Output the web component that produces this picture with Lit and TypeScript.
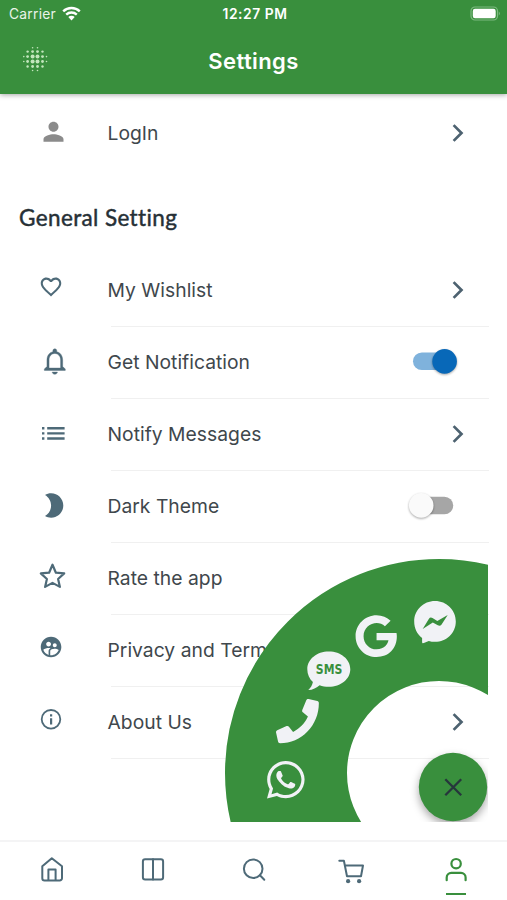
import { LitElement, html, svg, css } from "lit";
import { customElement, property } from "lit/decorators.js";

// Row icons are drawn on a 40x40 canvas, one unit per pixel.
const rowIcons: Record<string, unknown> = {
  person: svg`<path transform="translate(5.5 4.8) scale(1.25)" fill="#8b8b8b" d="M12 12c2.21 0 4-1.79 4-4s-1.79-4-4-4-4 1.79-4 4 1.79 4 4 4zm0 2c-2.67 0-8 1.34-8 4v2h16v-2c0-2.66-5.33-4-8-4z"/>`,
  heart: svg`<path transform="translate(5.7 5.5) scale(1.025)" d="M16.5 3c-1.74 0-3.41.81-4.5 2.09C10.91 3.81 9.24 3 7.5 3 4.42 3 2 5.42 2 8.5c0 3.78 3.4 6.86 8.55 11.54L12 21.35l1.45-1.32C18.6 15.36 22 12.28 22 8.5 22 5.42 19.58 3 16.5 3zm-4.4 15.55l-.1.1-.1-.1C7.14 14.24 4 11.39 4 8.5 4 6.5 5.5 5 7.5 5c1.54 0 3.04.99 3.57 2.36h1.87C13.46 5.99 14.96 5 16.5 5c2 0 3.5 1.5 3.5 3.5 0 2.89-3.14 5.74-7.9 10.05z"/>`,
  bell: svg`<path transform="translate(6.1 4.5) scale(1.31)" stroke="#4e6a78" stroke-width=".3" d="M12 22c1.1 0 2-.8 2-1.7h-4c0 .9.9 1.7 2 1.7zm6-6v-5c0-3.07-1.63-5.64-4.5-6.32V4c0-.83-.67-1.5-1.5-1.5s-1.5.67-1.5 1.5v.68C7.64 5.36 6 7.92 6 11v5l-2 2v1h16v-1l-2-2zm-1.6 1.2H7.6v-6.2c0-2.68 1.81-4.9 4.4-4.9s4.4 2.22 4.4 4.9v6.2z"/>`,
  list: svg`<path d="M9 14.1h2.4v2.4H9zM9 19.2h2.4v2.4H9zM9 24.3h2.4v2.4H9zM14.2 14.1h17.4v2.4H14.2zM14.2 19.2h17.4v2.4H14.2zM14.2 24.3h17.4v2.4H14.2z"/>`,
  moon: svg`<path transform="translate(5.9 5.9) scale(1.22)" d="M10 2c-1.82 0-3.53.5-5 1.35C7.99 5.08 10 8.3 10 12s-2.01 6.92-5 8.65C6.47 21.5 8.18 22 10 22c5.52 0 10-4.48 10-10S15.52 2 10 2z"/>`,
  star: svg`<path fill="none" stroke="#4e6a78" stroke-width="2.2" stroke-linejoin="round" d="M19.5 7.700L22.900 15.700L31.200 16.400L25.100 22L26.900 29.900L19.500 25.900L12.100 29.900L13.900 22L7.800 16.400L16.100 15.700Z"/>`,
  people: svg`<path transform="translate(5.7 5.7) scale(1.03)" d="M11.99 2c-5.52 0-10 4.48-10 10s4.48 10 10 10 10-4.48 10-10-4.48-10-10-10zm3.61 6.34c1.07 0 1.93.86 1.93 1.93 0 1.07-.86 1.93-1.93 1.93-1.07 0-1.93-.86-1.93-1.93-.01-1.07.86-1.93 1.93-1.93zm-6-1.58c1.3 0 2.36 1.06 2.36 2.36 0 1.3-1.06 2.36-2.36 2.36s-2.36-1.06-2.36-2.36c0-1.31 1.05-2.36 2.36-2.36zm0 9.13v3.75c-2.4-.75-4.3-2.6-5.14-4.96 1.05-1.12 3.67-1.69 5.14-1.69.53 0 1.2.08 1.9.22-1.64.87-1.9 2.02-1.9 2.68zM11.99 20c-.27 0-.53-.01-.79-.04v-4.07c0-1.42 2.94-2.13 4.4-2.13 1.07 0 2.92.39 3.84 1.15-1.17 2.97-4.06 5.09-7.45 5.09z"/>`,
  info: svg`<circle cx="18" cy="18.3" r="9.3" fill="none" stroke="#4e6a78" stroke-width="1.8"/><path d="M17 17.2h2.2v6.3H17zM17 13.2h2.2v2.2H17z"/>`,
};

const navIcons = [
  svg`<path d="M11.300 16.300L20.800 8.300L31 16.300V28.200a2.300 2.300 0 0 1-2.300 2.300H13.600a2.300 2.300 0 0 1-2.300-2.300ZM17.400 30.500V19.400h7.200V30.500"/>`,
  svg`<rect x="10.9" y="9.2" width="20.2" height="20.2" rx="2.2"/><path d="M21 9.200v20.200"/>`,
  svg`<circle cx="20.2" cy="18.7" r="9.300"/><path d="M26.900 25.300L31.300 29.700"/>`,
  svg`<path d="M4.300 10.700h4.600L12 26.200h14L28 15.500H9.900"/><g fill="#4e6a78" stroke="none"><circle cx="13.1" cy="31.2" r="2.1"/><circle cx="24.1" cy="31.2" r="2.1"/></g>`,
  svg`<g stroke="#398f3d" stroke-width="2.2"><circle cx="20.1" cy="13.700" r="4.700"/><path d="M10.700 30.200v-2.700a4.600 4.600 0 0 1 4.600-4.600h9.700a4.600 4.600 0 0 1 4.600 4.600v2.700"/></g>`,
];

@customElement("setting-row")
class SettingRow extends LitElement {
  @property() icon = "";
  @property() label = "";
  @property() control = "chevron";

  static styles = css`
    :host {
      display: flex;
      align-items: center;
      height: 68px;
      padding: 0 41px 0 33px;
    }
    .icon {
      width: 40px;
      height: 40px;
      fill: #4e6a78;
      flex: none;
    }
    .label {
      flex: 1;
      margin-left: 34.5px;
      padding-top: 1px;
      font-size: 19.3px;
      letter-spacing: 0.02px;
      color: #40474c;
      white-space: nowrap;
    }
    .chevron {
      width: 14px;
      height: 20px;
      margin-top: 1px;
      fill: none;
      stroke: #4d6270;
      stroke-width: 2.7;
    }
    .switch {
      width: 56px;
      height: 36px;
      margin-right: 4px;
      overflow: visible;
    }
    .thumb {
      filter: drop-shadow(0 1.5px 1.2px rgba(0, 0, 0, 0.35));
    }
  `;

  renderControl() {
    if (this.control === "on")
      return html`<svg class="switch" viewBox="406 343 56 36">
        <rect x="413" y="352.5" width="40" height="17.6" rx="8.8" fill="#7fb2dc" />
        <circle class="thumb" cx="444.6" cy="361.4" r="12.3" fill="#0868b8" />
      </svg>`;
    if (this.control === "off")
      return html`<svg class="switch" viewBox="406 487 56 36">
        <rect x="414" y="496.700" width="39.200" height="17.600" rx="8.800" fill="#a6a6a6" />
        <circle class="thumb" cx="421.200" cy="505.400" r="12.300" fill="#fafafa" />
      </svg>`;
    return html`<svg class="chevron" viewBox="0 0 14 20"><path d="M1.6 2.1L9.5 10L1.6 17.9" /></svg>`;
  }

  render() {
    return html`<svg class="icon" viewBox="0 0 40 40">${rowIcons[this.icon]}</svg>
      <span class="label">${this.label}</span>${this.renderControl()}`;
  }
}

@customElement("contact-menu")
class ContactMenu extends LitElement {
  static styles = css`
    :host {
      display: block;
      width: 263.5px;
      height: 263.5px;
      overflow: hidden;
    }
    svg {
      display: block;
    }
    .ring {
      fill: none;
      stroke: #398f3d;
      stroke-width: 122;
    }
    .glyph {
      fill: #f1f2f6;
    }
    .cut {
      fill: #398f3d;
    }
    .sms {
      font: 700 14px "DejaVu Sans Condensed", "DejaVu Sans", sans-serif;
    }
    .fab {
      fill: #398f3d;
      filter: drop-shadow(0 4px 4px rgba(0, 0, 0, 0.35));
    }
    .close {
      stroke: #26363c;
      stroke-width: 2.3;
    }
  `;
  render() {
    return html`<svg width="263.5" height="263.5" viewBox="224 558 263.5 263.5">
      <circle class="ring" cx="439" cy="773" r="153" />
      <g class="glyph">
        <path d="M435 600.9c11.6 0 20.8 9.1 20.8 20.500s-9.200 20.400-20.800 20.400c-2.300 0-4.300-.3-6.200-.9l-5 2.200c-1 .4-1.700-.1-1.700-1.100v-4.100c-4.900-3.700-7.900-9.700-7.900-16.500 0-11.400 9.200-20.500 20.800-20.500z" />
        <path class="cut" d="M422.700 629L428.800 619Q430.300 616.800 432.500 618.100L437.300 621.100L447.700 614.900L441.600 624.400Q440 626.500 437.800 625.200L432.800 622.600Z" />
        <path transform="translate(355.600 614.500) scale(.0845)" d="M488 261.800C488 403.300 391.100 504 248 504 110.800 504 0 393.200 0 256S110.800 8 248 8c66.800 0 123 24.500 166.300 64.900l-67.500 64.900C258.500 52.600 94.300 116.600 94.300 256c0 86.500 69.100 156.600 153.700 156.600 98.200 0 135-70.400 140.800-106.900H248v-85.300h236.100c2.300 12.700 3.900 24.900 3.900 41.400z" />
        <path d="M328.800 651.600c12 0 21.500 7.800 21.500 17.600s-9.500 17.600-21.500 17.600c-3.300 0-6.400-.5-9.200-1.600-2.700 2.700-7 4.600-11.300 4.900 2.300-2 4-4.900 4.600-8-3.500-3.300-5.600-7.800-5.600-12.900 0-9.800 9.500-17.600 21.500-17.600z" />
        <path transform="translate(276 699) scale(.0837 .0863)" d="M493.400 24.600l-104-24c-11.300-2.600-22.900 3.300-27.500 13.900l-48 112c-4.200 9.800-1.400 21.300 6.900 28l60.600 49.600c-36 76.700-98.900 140.500-177.200 177.200l-49.600-60.600c-6.800-8.300-18.200-11.100-28-6.900l-112 48C3.900 366.500-2 378.100.6 389.400l24 104C27.100 504.200 36.700 512 48 512c256.100 0 464-207.500 464-464 0-11.200-7.700-20.900-18.600-23.400z" />
        <path transform="translate(267 758.300) scale(.0839)" d="M380.900 97.100C339 55.100 283.200 32 223.900 32c-122.400 0-222 99.600-222 222 0 39.100 10.200 77.300 29.600 111L0 480l117.700-30.900c32.400 17.700 68.900 27 106.100 27h.1c122.300 0 224.100-99.600 224.100-222 0-59.300-25.200-115-67.100-157zm-157 341.600c-33.200 0-65.700-8.900-94-25.700l-6.700-4-69.800 18.300L72 359.200l-4.400-7c-18.500-29.400-28.200-63.300-28.200-98.200 0-101.700 82.800-184.500 184.600-184.500 49.300 0 95.600 19.200 130.400 54.100 34.800 34.900 56.200 81.200 56.100 130.500 0 101.800-84.900 184.600-186.600 184.600zm101.200-138.200c-5.500-2.800-32.800-16.200-37.900-18-5.100-1.900-8.800-2.800-12.500 2.800-3.700 5.600-14.300 18-17.600 21.800-3.200 3.700-6.500 4.200-12 1.400-32.600-16.300-54-29.100-75.500-66-5.700-9.800 5.700-9.100 16.300-30.300 1.800-3.700.9-6.900-.5-9.700-1.400-2.800-12.500-30.100-17.100-41.200-4.500-10.800-9.100-9.300-12.500-9.300-3.200-.2-6.900-.2-10.600-.2-3.700 0-9.700 1.400-14.800 6.900-5.100 5.600-19.400 19-19.400 46.300 0 27.300 19.900 53.700 22.600 57.400 2.800 3.700 39.100 59.700 94.800 83.800 35.200 15.200 49 16.500 66.600 13.900 10.700-1.600 32.800-13.400 37.400-26.400 4.600-13 4.600-24.100 3.200-26.400-1.300-2.500-5-3.900-10.500-6.600z" />
        <text class="sms cut" x="315.800" y="674.400" textLength="26.500" lengthAdjust="spacingAndGlyphs">SMS</text>
      </g>
      <circle class="fab" cx="453" cy="787" r="34.200" />
      <path class="close" d="M445.300 779.300L461.200 795.200M461.200 779.300L445.300 795.200" />
    </svg>`;
  }
}

@customElement("app-root")
class AppRoot extends LitElement {
  static styles = css`
    :host {
      display: flex;
      flex-direction: column;
      position: relative;
      width: 507px;
      height: 900px;
      overflow: hidden;
      background: #fff;
      font-family: Inter, "Liberation Sans", sans-serif;
    }
    header {
      flex: none;
      height: 94px;
      background: #398f3d;
      color: #fff;
      box-shadow: 0 1px 5px rgba(0, 0, 0, 0.35);
    }
    .status,
    .bar {
      display: grid;
      grid-template-columns: 1fr auto 1fr;
      align-items: center;
    }
    .status {
      height: 27px;
      padding: 0 6px 0 9px;
      font-size: 13.8px;
    }
    .carrier {
      display: flex;
      align-items: center;
      gap: 6px;
      letter-spacing: 0.25px;
      color: #e9f4e9;
    }
    .time {
      font-weight: 600;
      font-size: 13.8px;
      letter-spacing: 0.55px;
    }
    .battery {
      justify-self: end;
    }
    .bar {
      height: 67px;
      padding: 0 22px;
    }
    .dots {
      fill: #c3e6bd;
      margin-bottom: 2px;
    }
    h1 {
      margin: 0;
      font-size: 22px;
      font-weight: 600;
      letter-spacing: 0.4px;
    }
    main {
      flex: 1;
      padding-top: 4px;
    }
    h2 {
      margin: 36px 0 21px 19px;
      height: 32px;
      font: 400 22.5px/32px Lato, sans-serif;
      letter-spacing: 0.38px;
      color: #263036;
      -webkit-text-stroke: 0.45px #263036;
    }
    .line {
      height: 1px;
      margin: 3px 18px 0 111px;
      background: #f0f0f0;
    }
    contact-menu {
      position: absolute;
      left: 224px;
      top: 558px;
    }
    nav {
      flex: none;
      display: grid;
      grid-template-columns: repeat(5, 1fr);
      justify-items: center;
      height: 58px;
      border-top: 2px solid #f4f4f5;
      background: #fff;
    }
    .tab {
      display: flex;
      flex-direction: column;
      align-items: center;
      padding-top: 8px;
    }
    .tab svg {
      fill: none;
      stroke: #4e6a78;
      stroke-width: 2;
      stroke-linejoin: round;
      stroke-linecap: round;
    }
    .mark {
      width: 20px;
      height: 2.4px;
      margin-top: 3px;
      background: #398f3d;
    }
  `;

  rows = [
    ["heart", "My Wishlist", "chevron"],
    ["bell", "Get Notification", "on"],
    ["list", "Notify Messages", "chevron"],
    ["moon", "Dark Theme", "off"],
    ["star", "Rate the app", "chevron"],
    ["people", "Privacy and Term", "chevron"],
    ["info", "About Us", "chevron"],
  ];

  renderDots() {
    const pos = [1.8, 5.6, 10.6, 15.5, 20.5, 24.5];
    const sizes = [
      [0, 0, 0.8, 0.8, 0, 0],
      [0, 1.2, 1.4, 1.4, 1.2, 0],
      [0.8, 1.4, 2, 2, 1.4, 0.8],
      [0.8, 1.4, 2, 2, 1.4, 0.8],
      [0, 1.2, 1.4, 1.4, 1.2, 0],
      [0, 0, 0.8, 0.8, 0, 0],
    ];
    return sizes.flatMap((line, r) =>
      line.map((s, c) => (s ? svg`<circle cx=${pos[c]} cy=${pos[r]} r=${s} />` : null))
    );
  }

  render() {
    return html`
      <header>
        <div class="status">
          <span class="carrier">Carrier
            <svg width="19" height="15" viewBox="0 0 19 15" fill="none" stroke="#fff" stroke-width="2.4">
              <path d="M1.2 5.3A12 12 0 0 1 17.8 5.3M4.2 8.6A7.8 7.8 0 0 1 14.8 8.6" />
              <path fill="#fff" stroke="none" d="M9.5 14.4L6.3 11.1A4.6 4.6 0 0 1 12.7 11.1Z" />
            </svg>
          </span>
          <span class="time">12:27 PM</span>
          <svg class="battery" width="31" height="15" viewBox="0 0 31 15">
            <rect x="1" y="1" width="26.5" height="13" rx="4" fill="none" stroke="#7dba80" stroke-width="1.2" />
            <rect x="2.8" y="2.8" width="22.9" height="9.4" rx="2.2" fill="#fff" />
            <path d="M28.8 5.5Q31 7.5 28.8 9.5Z" fill="#7dba80" />
          </svg>
        </div>
        <div class="bar">
          <svg class="dots" width="27" height="27" viewBox="0 0 27 27">${this.renderDots()}</svg>
          <h1>Settings</h1>
        </div>
      </header>
      <main>
        <setting-row icon="person" label="LogIn"></setting-row>
        <h2>General Setting</h2>
        ${this.rows.map(
          ([icon, label, control]) => html`<setting-row icon=${icon} label=${label} control=${control}></setting-row>
            <div class="line"></div>`
        )}
      </main>
      <contact-menu></contact-menu>
      <nav>
        ${navIcons.map(
          (icon, i) => html`<div class="tab">
            <svg width="40" height="40" viewBox="0 0 40 40">${icon}</svg>
            ${i === 4 ? html`<span class="mark"></span>` : null}
          </div>`
        )}
      </nav>
    `;
  }
}
